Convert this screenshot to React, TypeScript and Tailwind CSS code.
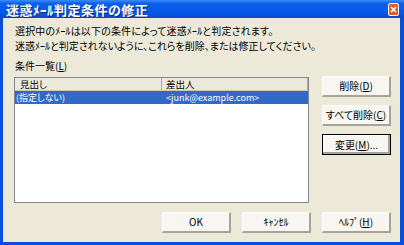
import React from "react";

const font = "font-['Noto_Sans_CJK_JP',sans-serif] [font-feature-settings:'palt']";

function Btn({ children, def = false, w = "w-[69px]" }: { children: React.ReactNode; def?: boolean; w?: string }) {
  return (
    <div
      className={`${w} h-[21px] flex items-center justify-center text-[10px] leading-[12px] text-black bg-[#f7f6f1] ${
        def
          ? "border border-black shadow-[inset_-2px_-2px_0_#a6a499,inset_1px_1px_0_#ffffff]"
          : "border-t border-l border-t-white border-l-white border-r-2 border-b-2 border-r-[#a6a499] border-b-[#a6a499]"
      }`}
    >
      {children}
    </div>
  );
}

export default function App() {
  return (
    <div className={`w-[404px] h-[245px] flex flex-col bg-[#0a4fdc] ${font}`}>
      <div className="h-[18px] flex items-center justify-between pl-[6px] pr-[5px] bg-[linear-gradient(to_bottom,#3d8bf7_0%,#0a5eea_20%,#0658e6_70%,#0448d4_100%)]">
        <span className="text-white font-bold text-[13px] leading-[15px] tracking-[0.5px] [text-shadow:1px_1px_0_#0a2a8a]">
          迷惑ﾒｰﾙ判定条件の修正
        </span>
        <div className="w-[11px] h-[13px] mt-[1px] rounded-[2px] border border-white bg-[#e2572f] flex items-center justify-center">
          <svg width="7" height="7" viewBox="0 0 7 7">
            <path d="M1 1 L6 6 M6 1 L1 6" stroke="#ffffff" strokeWidth="1.6" />
          </svg>
        </div>
      </div>
      <div className="flex-1 ml-[3px] mr-[4px] mb-[3px] bg-[#ece9d8] flex flex-col pl-[11px] pr-[9px] pt-[5px] text-black">
        <div className="text-[10px] leading-[15px] pl-[1px] tracking-[0.15px]">
          <div>選択中のﾒｰﾙは以下の条件によって迷惑ﾒｰﾙと判定されます。</div>
          <div className="tracking-[0px]">迷惑ﾒｰﾙと判定されないように、これらを削除、または修正してください。</div>
        </div>
        <div className="mt-[5px] text-[10px] leading-[15px] pl-[1px]">
          条件一覧(<span className="underline">L</span>)
        </div>
        <div className="mt-[4px] flex items-start">
          <div className="w-[295px] h-[126px] border border-[#828790] bg-white flex flex-col">
            <div className="h-[13px] flex text-[9.5px] leading-[12px] bg-[#ebe9dc] border-b border-[#c9c6b6]">
              <div className="w-[147px] flex items-center pl-[5px] border-r border-[#aca899]">見出し</div>
              <div className="flex-1 flex items-center pl-[4px] border-r border-[#aca899]">差出人</div>
            </div>
            <div className="h-[13px] flex text-[9px] leading-[13px] bg-[#316ac5] text-white">
              <div className="w-[147px] flex items-center pl-[1px]">(指定しない)</div>
              <div className="flex-1 flex items-center pl-[4px]">&lt;junk@example.com&gt;</div>
            </div>
          </div>
          <div className="ml-auto -mt-[1px] flex flex-col gap-[8px]">
            <Btn>
              削除(<span className="underline">D</span>)
            </Btn>
            <Btn>
              すべて削除(<span className="underline">C</span>)
            </Btn>
            <Btn def>
              変更(<span className="underline">M</span>)...
            </Btn>
          </div>
        </div>
        <div className="mt-[9px] flex justify-end gap-[11px]">
          <Btn>OK</Btn>
          <Btn>ｷｬﾝｾﾙ</Btn>
          <Btn>
            ﾍﾙﾌﾟ(<span className="underline">H</span>)
          </Btn>
        </div>
      </div>
    </div>
  );
}
